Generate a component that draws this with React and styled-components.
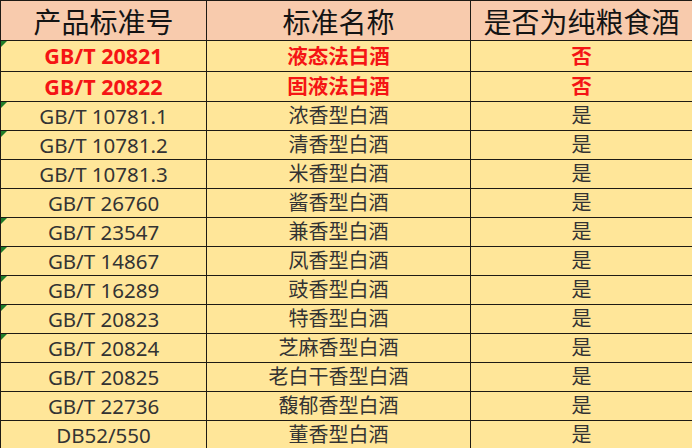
import React from "react";
import styled, { createGlobalStyle, css } from "styled-components";

const GlobalStyle = createGlobalStyle`
  html, body {
    margin: 0;
    padding: 0;
    background: #ffe699;
    overflow: hidden;
  }
  *, *::before, *::after {
    box-sizing: border-box;
  }
`;

const LINE = "1px solid #1e1a14";

const Sheet = styled.div`
  display: grid;
  grid-template-columns: 206px 264px 1fr;
  grid-template-rows: 40px 31px 30px repeat(12, 29px);
  width: 692px;
  border-top: ${LINE};
  border-left: ${LINE};
  font-family: "Noto Sans", "Noto Sans CJK SC", sans-serif;
  background: #ffe699;
`;

const HeadCell = styled.div`
  display: flex;
  align-items: center;
  justify-content: center;
  background: #f8cbad;
  color: #141414;
  font-size: 28px;
  line-height: 1;
  padding-top: 2px;
  border-bottom: ${LINE};
  border-right: ${({ $last }) => ($last ? "none" : LINE)};
  white-space: nowrap;
`;

const Cell = styled.div`
  position: relative;
  display: flex;
  align-items: center;
  justify-content: center;
  font-size: ${({ $code }) => ($code ? "20.5px" : "20px")};
  line-height: 1;
  color: #333;
  border-bottom: ${LINE};
  border-right: ${({ $last }) => ($last ? "none" : LINE)};
  white-space: nowrap;
  ${({ $red, $code }) =>
    $red &&
    css`
      color: #f51414;
      font-weight: 700;
      font-size: ${$code ? "21.5px" : "20.5px"};
    `}
  ${({ $mark }) =>
    $mark &&
    css`
      &::before {
        content: "";
        position: absolute;
        top: 0;
        left: 0;
        border-top: 6px solid #1e7b2a;
        border-right: 6px solid transparent;
      }
    `}
`;

const Row = styled.div`
  display: contents;
`;

const rows = [
  { code: "GB/T 20821", name: "液态法白酒", pure: "否", red: true, mark: true },
  { code: "GB/T 20822", name: "固液法白酒", pure: "否", red: true },
  { code: "GB/T 10781.1", name: "浓香型白酒", pure: "是", mark: true },
  { code: "GB/T 10781.2", name: "清香型白酒", pure: "是", mark: true },
  { code: "GB/T 10781.3", name: "米香型白酒", pure: "是" },
  { code: "GB/T 26760", name: "酱香型白酒", pure: "是" },
  { code: "GB/T 23547", name: "兼香型白酒", pure: "是", mark: true },
  { code: "GB/T 14867", name: "凤香型白酒", pure: "是", mark: true },
  { code: "GB/T 16289", name: "豉香型白酒", pure: "是", mark: true },
  { code: "GB/T 20823", name: "特香型白酒", pure: "是", mark: true },
  { code: "GB/T 20824", name: "芝麻香型白酒", pure: "是", mark: true },
  { code: "GB/T 20825", name: "老白干香型白酒", pure: "是" },
  { code: "GB/T 22736", name: "馥郁香型白酒", pure: "是" },
  { code: "DB52/550", name: "董香型白酒", pure: "是" },
];

export default function App() {
  return (
    <>
      <GlobalStyle />
      <Sheet>
        <HeadCell>产品标准号</HeadCell>
        <HeadCell>标准名称</HeadCell>
        <HeadCell $last>是否为纯粮食酒</HeadCell>
        {rows.map((r) => (
          <Row key={r.code}>
            <Cell $code $red={r.red} $mark={r.mark}>{r.code}</Cell>
            <Cell $red={r.red}>{r.name}</Cell>
            <Cell $red={r.red} $last>{r.pure}</Cell>
          </Row>
        ))}
      </Sheet>
    </>
  );
}
